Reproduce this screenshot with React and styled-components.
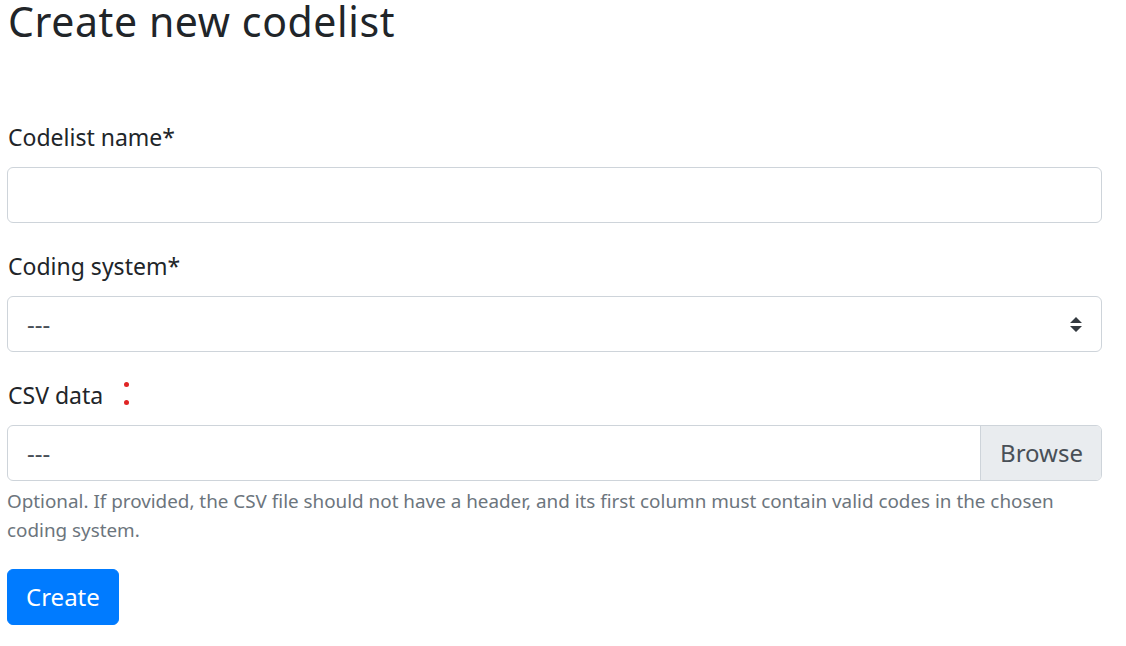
import React from 'react';
import styled, { createGlobalStyle } from 'styled-components';

const GlobalStyle = createGlobalStyle`
    html, body {
        margin: 0;
        padding: 0;
        background: #fff;
    }
    body {
        font-family: "Noto Sans", "Liberation Sans", sans-serif;
        color: #212529;
        font-size: 24px;
        line-height: 1.5;
    }
    * {
        box-sizing: border-box;
    }
`;

const Page = styled.div`
    width: 1102px;
    padding-left: 7px;
`;

const Title = styled.h1`
    font-size: 41px;
    font-weight: 400;
    line-height: 1.2;
    letter-spacing: 0.6px;
    margin: -3.5px 0 72.7px 1px;
`;

const FormGroup = styled.div`
    margin-bottom: 24px;
`;

const Label = styled.label`
    display: inline-flex;
    align-items: center;
    margin: 0 0 12px 1px;
    font-size: 23px;
    line-height: 37px;
    padding-top: 1px;
    height: 37px;
`;

const Marker = styled.span`
    display: inline-flex;
    flex-direction: column;
    gap: 13px;
    margin: -4px 0 0 21px;
    span {
        width: 5px;
        height: 5px;
        border-radius: 50%;
        background: #e02424;
    }
`;

const Field = styled.div`
    display: flex;
    align-items: center;
    height: 56px;
    border: 1px solid #ced4da;
    border-radius: 6px;
    color: #495057;
    background: #fff;
    overflow: hidden;
`;

const FieldText = styled.span`
    flex: 1;
    padding: 0 19px;
`;

const Arrows = styled.svg`
    width: 12px;
    height: 15px;
    margin-right: 19px;
`;

const BrowseButton = styled.span`
    align-self: stretch;
    display: flex;
    align-items: center;
    padding: 0 18px 0 19px;
    background: #e9ecef;
    border-left: 1px solid #ced4da;
    color: #495057;
`;

const Help = styled.small`
    display: block;
    margin-top: 6px;
    font-size: 18.85px;
    line-height: 29px;
    color: #6c757d;
`;

const Button = styled.button`
    font-family: inherit;
    font-size: 24px;
    line-height: 36px;
    padding: 9px 18px;
    color: #fff;
    background: #007bff;
    border: 1px solid #007bff;
    border-radius: 6px;
`;

const App = () => {
    return (
        <>
            <GlobalStyle />
            <Page>
                <Title>Create new codelist</Title>
                <FormGroup>
                    <Label>Codelist name*</Label>
                    <Field />
                </FormGroup>
                <FormGroup>
                    <Label>Coding system*</Label>
                    <Field>
                        <FieldText>---</FieldText>
                        <Arrows viewBox='0 0 4 5'>
                            <path d='M2 0L0 2h4zm0 5L0 3h4z' fill='#343a40' />
                        </Arrows>
                    </Field>
                </FormGroup>
                <FormGroup>
                    <Label>
                        CSV data
                        <Marker><span /><span /></Marker>
                    </Label>
                    <Field>
                        <FieldText>---</FieldText>
                        <BrowseButton>Browse</BrowseButton>
                    </Field>
                    <Help>
                        Optional. If provided, the CSV file should not have a header, and its first column must contain valid codes in the chosen coding system.
                    </Help>
                </FormGroup>
                <Button>Create</Button>
            </Page>
        </>
    );
};

export default App;
